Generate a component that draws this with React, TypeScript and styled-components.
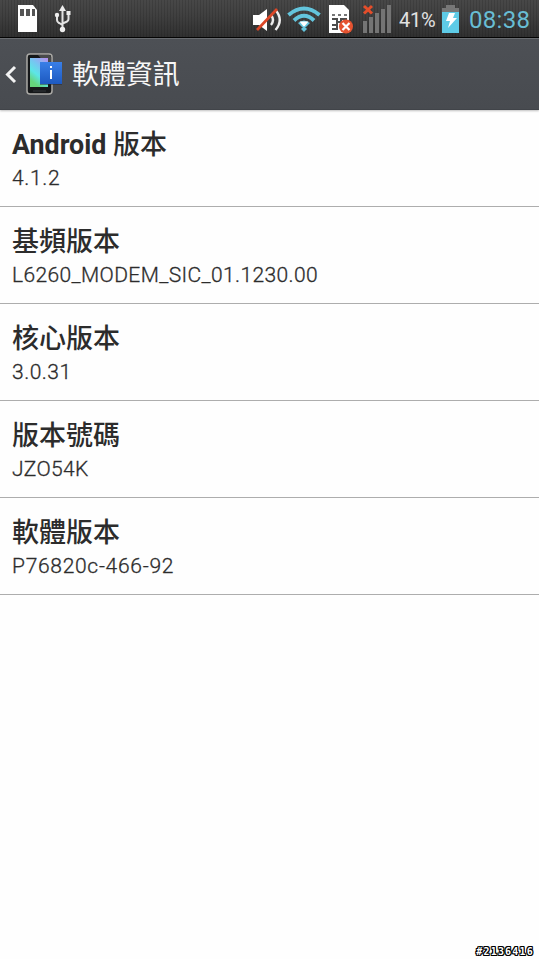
import React from "react";
import styled, { createGlobalStyle } from "styled-components";

const GlobalStyle = createGlobalStyle`
  * { box-sizing: border-box; }
  html, body { margin: 0; background: #fefefe; }
  body { font-family: Roboto, "Noto Sans CJK TC", sans-serif; }
`;

const Screen = styled.div`
  position: relative;
  width: 539px;
  height: 959px;
  overflow: hidden;
  display: flex;
  flex-direction: column;
  background: #fefefe;
`;

const StatusBar = styled.header`
  height: 38px;
  flex: none;
  display: flex;
  justify-content: space-between;
  background: repeating-linear-gradient(90deg, transparent 0 2px, rgba(0, 0, 0, 0.12) 2px 3px),
    linear-gradient(#484848, #3f3f3f 45%, #303030);
  border-bottom: 1px solid #050505;
`;

const StatusGroup = styled.div`
  display: flex;
  align-items: flex-start;
  height: 37px;
`;

const StatusIcon = styled.svg<{ $gap?: number }>`
  display: block;
  flex: none;
  height: 37px;
  margin-left: ${(p) => p.$gap ?? 0}px;
`;

const Battery = styled.span`
  width: 37px;
  margin-left: 7px;
  font-size: 20px;
  line-height: 41px;
  letter-spacing: -0.2px;
  color: #e2e2e2;
  white-space: nowrap;
`;

const Clock = styled.time`
  width: 70px;
  margin-left: 10px;
  font-size: 24px;
  line-height: 41px;
  letter-spacing: 0.3px;
  color: #68bdd4;
  white-space: nowrap;
`;

const ActionBar = styled.div`
  height: 72px;
  flex: none;
  display: flex;
  align-items: center;
  border-top: 1px solid #696c70;
  border-bottom: 1px solid #414449;
  background: linear-gradient(#4d5055, #484b50);
  box-shadow: 0 1px 2px rgba(0, 0, 0, 0.25);
`;

const BarIcons = styled.svg`
  display: block;
  flex: none;
`;

const Title = styled.h1`
  margin: 2px 0 0 3px;
  font-size: 26.9px;
  line-height: 36px;
  font-weight: 400;
  color: #f7f7f7;
`;

const List = styled.main`
  display: flex;
  flex-direction: column;
`;

const Row = styled.section`
  height: 97px;
  padding: 17px 12px 0;
  border-bottom: 1px solid #adadad;
  color: #2c2c2c;
`;

const RowTitle = styled.h2`
  margin: 0;
  height: 35px;
  font-size: 27px;
  line-height: 36px;
  font-weight: 500;
  white-space: nowrap;
`;

const Latin = styled.span`
  font-size: 26.8px;
  font-weight: 700;
`;

const RowValue = styled.p<{ $tracking: number }>`
  margin: 0;
  font-size: 21px;
  line-height: 32px;
  font-weight: 300;
  -webkit-text-stroke: 0.3px currentColor;
  letter-spacing: ${(p) => p.$tracking}px;
  white-space: nowrap;
`;

const Tag = styled.div`
  position: absolute;
  right: 5px;
  bottom: 1px;
  font: 700 10px/12px "DejaVu Sans Mono", monospace;
  letter-spacing: 1.2px;
  color: #fff;
  text-shadow: 1px 0 #000, -1px 0 #000, 0 1px #000, 0 -1px #000, 1px 1px #000, -1px -1px #000,
    1px -1px #000, -1px 1px #000;
`;

const rows: { latin?: string; title: string; value: string; tracking: number }[] = [
  { latin: "Android ", title: "版本", value: "4.1.2", tracking: 0.65 },
  { title: "基頻版本", value: "L6260_MODEM_SIC_01.1230.00", tracking: 0.38 },
  { title: "核心版本", value: "3.0.31", tracking: 0.5 },
  { title: "版本號碼", value: "JZO54K", tracking: 0.3 },
  { title: "軟體版本", value: "P76820c-466-92", tracking: 0.7 },
];

const StorageIcons = () => (
  <StatusIcon width="80" viewBox="0 0 80 37">
    <path d="M18 5H33L37 10V32H18Z" fill="#fff" />
    <path d="M20 9h4v7h-4zM26 9h4v7h-4zM32 9h3v7h-3z" fill="#555" />
    <g stroke="#e3e3e3" strokeWidth="2" fill="none">
      <path d="M62.5 9V29M57 17V20Q57 22 59 23L62.5 25M68.5 14V19Q68.5 21 66 22L62.5 23.5" />
    </g>
    <g fill="#eee">
      <path d="M62.5 5L66 11H59Z" />
      <circle cx="57" cy="15" r="2.2" />
      <rect x="66.5" y="11" width="4" height="4" />
      <circle cx="62.5" cy="29.5" r="2.7" />
    </g>
  </StatusIcon>
);

const SoundIcon = () => (
  <StatusIcon width="32" viewBox="252 0 32 37">
    <path d="M253 15H259L267 9V31L259 25H253Z" fill="#fff" />
    <path d="M271 15Q275 20 271 25M275.500 10Q284 20 275.500 30" fill="none" stroke="#eee" strokeWidth="2.4" />
    <path d="M257 30L277 9" stroke="#dc4727" strokeWidth="2.7" />
  </StatusIcon>
);

const WifiIcon = () => (
  <StatusIcon width="36" $gap={3} viewBox="287 0 36 37">
    <g fill="none" stroke="#63c4dc" strokeWidth="4">
      <path d="M288.500 15Q304 2 319.500 15" />
      <path d="M294 20.500Q304 11 314 20.500" />
    </g>
    <path d="M298 23Q304 18 310 23L306 27H302Z" fill="#63c4dc" />
    <path d="M299.500 21.500H308.500L304 27Z" fill="#fff" />
    <path d="M304 26L307 29L304 32L301 29Z" fill="#63c4dc" />
  </StatusIcon>
);

const SimIcon = () => (
  <StatusIcon width="27" $gap={5} viewBox="328 0 27 37">
    <path d="M329 5H344L349 10V33H329Z" fill="#fff" />
    <path d="M332 15h3M338 15h3M344 15h3" stroke="#777" strokeWidth="2" />
    <path d="M332 19h5v3h4v-3h5v4M332 25h5v-3M332 29h5v-3" fill="none" stroke="#4d4d4d" strokeWidth="2" />
    <circle cx="346" cy="26.500" r="7" fill="#e55330" />
    <path d="M342.500 23L349.500 30M349.500 23L342.500 30" stroke="#fff" strokeWidth="2.2" />
  </StatusIcon>
);

const SignalIcon = () => (
  <StatusIcon width="30" $gap={7} viewBox="362 0 30 37">
    <path d="M363 21h4v12h-4zM369 17h4v16h-4zM375 13h4v20h-4zM381 9h4v24h-4zM387 5h4v28h-4z" fill="#747474" />
    <path d="M364 6L372 13.500M372 6L364 13.500" stroke="#e54e2b" strokeWidth="3" />
  </StatusIcon>
);

const BatteryIcon = () => (
  <StatusIcon width="18" $gap={5} viewBox="441 0 18 37">
    <path d="M446 5h9v3h4v5h-17V8h4z" fill="#777" />
    <path d="M442 12h17v21h-17z" fill="#5ecbe7" />
    <path d="M449 13H455L453 18H457L448 28L450 21H446Z" fill="#fff" />
  </StatusIcon>
);

const AppIcons = () => (
  <BarIcons width="69" height="70" viewBox="0 39 69 70">
    <defs>
      <linearGradient id="display" x1="1" y1="0" x2=".5" y2="1">
        <stop offset="0" stopColor="#b98df0" />
        <stop offset=".4" stopColor="#78c4f2" />
        <stop offset=".7" stopColor="#5ce6e6" />
        <stop offset="1" stopColor="#65d47b" />
      </linearGradient>
      <linearGradient id="badge" x1="0" y1="0" x2="0" y2="1">
        <stop offset="0" stopColor="#397fe7" />
        <stop offset="1" stopColor="#1d59c0" />
      </linearGradient>
    </defs>
    <path d="M15 67L7.500 74.500L15 82" fill="none" stroke="#f3f3f3" strokeWidth="3" />
    <rect x="27" y="54" width="25" height="40" rx="3" fill="#151719" stroke="#aaa9a5" strokeWidth="1.500" />
    <path d="M38 55H49Q51 55 51 58V70Z" fill="#494a4c" />
    <path d="M30 58H48V87H30Z" fill="url(#display)" />
    <path d="M33 91H46" stroke="#34383c" />
    <path d="M40 62H62V85H40Z" fill="#25282d" opacity=".5" />
    <path d="M40 62H62V84H40Z" fill="url(#badge)" />
    <path d="M50 66h2v2h-2zM50 70h2v9h-2z" fill="#fff" />
  </BarIcons>
);

export default function App() {
  return (
    <>
      <GlobalStyle />
      <Screen>
        <StatusBar>
          <StorageIcons />
          <StatusGroup>
            <SoundIcon />
            <WifiIcon />
            <SimIcon />
            <SignalIcon />
            <Battery>41%</Battery>
            <BatteryIcon />
            <Clock>08:38</Clock>
          </StatusGroup>
        </StatusBar>
        <ActionBar>
          <AppIcons />
          <Title>軟體資訊</Title>
        </ActionBar>
        <List>
          {rows.map((row) => (
            <Row key={row.value}>
              <RowTitle>
                {row.latin && <Latin>{row.latin}</Latin>}
                {row.title}
              </RowTitle>
              <RowValue $tracking={row.tracking}>{row.value}</RowValue>
            </Row>
          ))}
        </List>
        <Tag>#2136416</Tag>
      </Screen>
    </>
  );
}
